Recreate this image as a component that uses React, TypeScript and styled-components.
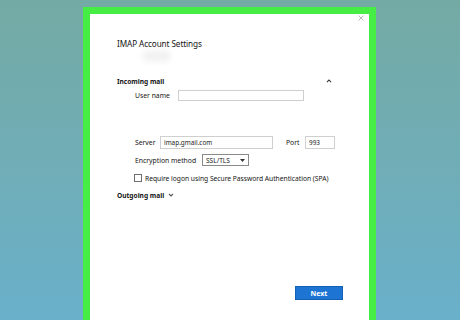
import React from "react";
import styled, { createGlobalStyle } from "styled-components";

const Global = createGlobalStyle`
  html, body { margin: 0; padding: 0; }
  body {
    width: 460px;
    height: 320px;
    overflow: hidden;
    background: linear-gradient(180deg, #74aaa4 0%, #70adb6 50%, #69b0ca 100%);
    font-family: "Noto Sans", "Open Sans", sans-serif;
    color: #1f1f1f;
  }
`;

const Stage = styled.div`
  display: flex;
  padding: 7px 0 0 83px;
  height: 320px;
  box-sizing: border-box;
  overflow: hidden;
`;

const Frame = styled.div`
  width: 279px;
  height: 313px;
  border: 7px solid #45ed45;
  border-bottom: none;
  background: #ffffff;
  display: flex;
  flex-direction: column;
`;

const CloseRow = styled.div`
  height: 10px;
  display: flex;
  justify-content: flex-end;
  align-items: flex-start;
  padding: 1px 5px 0 0;
  box-sizing: border-box;
`;

const Content = styled.div`
  display: flex;
  flex-direction: column;
  padding: 0 34px 0 27px;
`;

const Title = styled.div`
  margin-top: 14px;
  height: 12px;
  line-height: 12px;
  font-size: 8.2px;
  letter-spacing: -0.1px;
  color: #141414;
  white-space: nowrap;
`;

const Smudge = styled.div`
  margin: 1px 0 0 26px;
  width: 27px;
  height: 10px;
  background: #ececec;
  filter: blur(3px);
  opacity: 0.8;
`;

const SectionHeader = styled.div<{ $mt: number; $spread?: boolean }>`
  margin-top: ${(p) => p.$mt}px;
  height: 12px;
  display: flex;
  align-items: center;
  justify-content: ${(p) => (p.$spread ? "space-between" : "flex-start")};
  gap: 4px;
  font-size: 6.6px;
  font-weight: 700;
  color: #141414;
  white-space: nowrap;
`;

const Row = styled.div<{ $mt: number; $h: number }>`
  margin-top: ${(p) => p.$mt}px;
  height: ${(p) => p.$h}px;
  display: flex;
  align-items: center;
  padding-left: 18px;
  font-size: 6.8px;
  color: #141414;
  white-space: nowrap;
`;

const Label = styled.span<{ $w: number }>`
  width: ${(p) => p.$w}px;
  flex: none;
`;

const Input = styled.div<{ $w: number; $h: number }>`
  width: ${(p) => p.$w}px;
  height: ${(p) => p.$h}px;
  box-sizing: border-box;
  border: 1px solid #cfcfcf;
  background: #fff;
  display: flex;
  align-items: center;
  padding-left: 3px;
  font-size: 6.4px;
  color: #222;
  flex: none;
`;

const Select = styled.div`
  width: 47px;
  height: 12px;
  box-sizing: border-box;
  border: 1px solid #8a8a8a;
  display: flex;
  align-items: center;
  justify-content: space-between;
  padding: 0 3px 0 3px;
  font-size: 6.6px;
  color: #1a1a1a;
`;

const Check = styled.span`
  width: 8px;
  height: 8px;
  box-sizing: border-box;
  border: 1px solid #6f6f6f;
  margin: 0 3px 0 -1px;
  flex: none;
`;

const CheckText = styled.span`
  font-size: 6.7px;
`;

const Footer = styled.div`
  margin-top: 85px;
  display: flex;
  justify-content: flex-end;
  padding-right: 26px;
`;

const NextButton = styled.button`
  width: 48px;
  height: 14px;
  box-sizing: border-box;
  border: 1px solid #1361b5;
  background: #1e74d3;
  color: #fff;
  font-family: "Noto Sans", sans-serif;
  font-size: 7px;
  font-weight: 700;
  padding: 0;
  display: flex;
  align-items: center;
  justify-content: center;
`;

const Chevron = ({ up, color }: { up?: boolean; color: string }) => (
  <svg width="6" height="4" viewBox="0 0 6 4">
    <path
      d={up ? "M1 3.2 L3 1 L5 3.2" : "M1 1 L3 3 L5 1"}
      fill="none"
      stroke={color}
      strokeWidth="1.1"
    />
  </svg>
);

export default function App() {
  return (
    <>
      <Global />
      <Stage>
        <Frame>
          <CloseRow>
            <svg width="6" height="6" viewBox="0 0 6 6">
              <path d="M0.5 0.5 L5.5 5.5 M5.5 0.5 L0.5 5.5" stroke="#a9a9a9" strokeWidth="0.8" />
            </svg>
          </CloseRow>
          <Content>
            <Title>IMAP Account Settings</Title>
            <Smudge />
            <SectionHeader $mt={14} $spread>
              <span>Incoming mail</span>
              <span style={{ marginRight: 3, display: "flex" }}>
                <Chevron up color="#333" />
              </span>
            </SectionHeader>
            <Row $mt={3} $h={11}>
              <Label $w={43}>User name</Label>
              <Input $w={126} $h={11} />
            </Row>
            <Row $mt={35} $h={13}>
              <Label $w={25}>Server</Label>
              <Input $w={113} $h={13}>imap.gmail.com</Input>
              <Label $w={19} style={{ marginLeft: 13 }}>Port</Label>
              <Input $w={30} $h={13}>993</Input>
            </Row>
            <Row $mt={5} $h={12}>
              <Label $w={67}>Encryption method</Label>
              <Select>
                <span>SSL/TLS</span>
                <svg width="5" height="3" viewBox="0 0 5 3">
                  <path d="M0 0 L5 0 L2.5 3 Z" fill="#333" />
                </svg>
              </Select>
            </Row>
            <Row $mt={7} $h={10}>
              <Check />
              <CheckText>Require logon using Secure Password Authentication (SPA)</CheckText>
            </Row>
            <SectionHeader $mt={6}>
              <span>Outgoing mail</span>
              <Chevron color="#555" />
            </SectionHeader>
          </Content>
          <Footer>
            <NextButton>Next</NextButton>
          </Footer>
        </Frame>
      </Stage>
    </>
  );
}
